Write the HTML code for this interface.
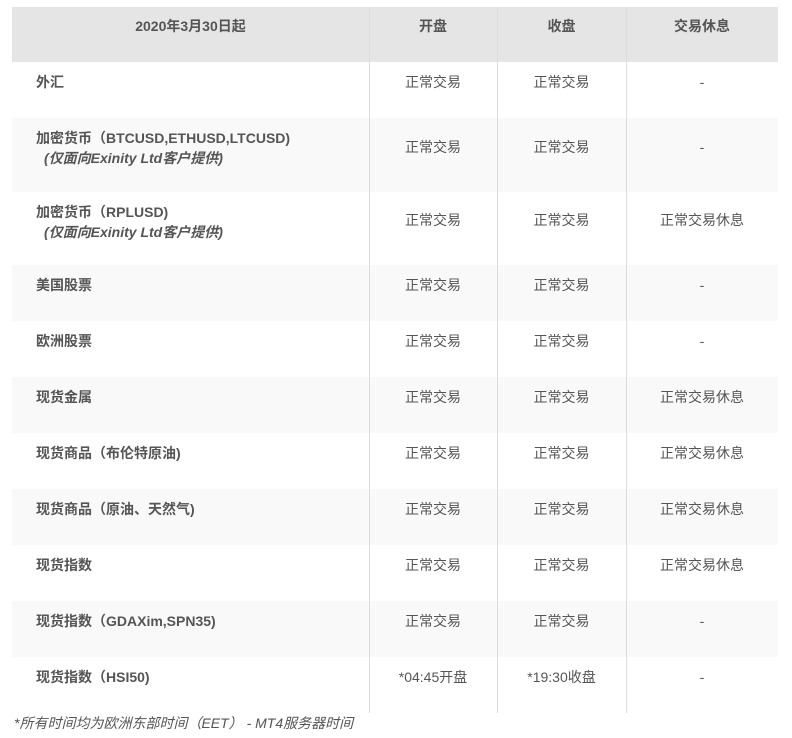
<!DOCTYPE html>
<html><head><meta charset="utf-8"><style>
body{margin:0;width:792px;height:738px;background:#fff;font-family:"Liberation Sans","Noto Sans CJK SC",sans-serif;color:#555;font-size:14px;position:relative;overflow:hidden}
.r{position:absolute;left:12px;width:766px}
.g{background:#f9f9f9}
.h{background:#e5e5e5;font-weight:bold;color:#555}
.c{position:absolute;top:10px;text-align:center;line-height:20px}
.c0{left:24px;text-align:left;font-weight:bold}
.c1{left:357px;width:128px}
.c2{left:485px;width:129px}
.c3{left:614px;width:152px}
.v{position:absolute;top:7px;width:1px;height:706px;background:#ddd}
i{font-weight:bold;margin-left:8px}
</style></head><body>
<div class="r h" style="top:7px;height:55px"><div class="c c0" style="left:0;width:357px;text-align:center;top:9px">2020年3月30日起</div><div class="c c1" style="top:9px">开盘</div><div class="c c2" style="top:9px">收盘</div><div class="c c3" style="top:9px">交易休息</div></div>
<div class="r" style="top:62px;height:56px"><div class="c c0">外汇</div><div class="c c1">正常交易</div><div class="c c2">正常交易</div><div class="c c3">-</div></div>
<div class="r g" style="top:118px;height:74px"><div class="c c0">加密货币（BTCUSD,ETHUSD,LTCUSD)<br><i>(仅面向Exinity Ltd客户提供)</i></div><div class="c c1" style="top:19px">正常交易</div><div class="c c2" style="top:19px">正常交易</div><div class="c c3" style="top:19px">-</div></div>
<div class="r" style="top:192px;height:73px"><div class="c c0">加密货币（RPLUSD)<br><i>(仅面向Exinity Ltd客户提供)</i></div><div class="c c1" style="top:18px">正常交易</div><div class="c c2" style="top:18px">正常交易</div><div class="c c3" style="top:18px">正常交易休息</div></div>
<div class="r g" style="top:265px;height:56px"><div class="c c0">美国股票</div><div class="c c1">正常交易</div><div class="c c2">正常交易</div><div class="c c3">-</div></div>
<div class="r" style="top:321px;height:56px"><div class="c c0">欧洲股票</div><div class="c c1">正常交易</div><div class="c c2">正常交易</div><div class="c c3">-</div></div>
<div class="r g" style="top:377px;height:56px"><div class="c c0">现货金属</div><div class="c c1">正常交易</div><div class="c c2">正常交易</div><div class="c c3">正常交易休息</div></div>
<div class="r" style="top:433px;height:56px"><div class="c c0">现货商品（布伦特原油)</div><div class="c c1">正常交易</div><div class="c c2">正常交易</div><div class="c c3">正常交易休息</div></div>
<div class="r g" style="top:489px;height:56px"><div class="c c0">现货商品（原油、天然气)</div><div class="c c1">正常交易</div><div class="c c2">正常交易</div><div class="c c3">正常交易休息</div></div>
<div class="r" style="top:545px;height:56px"><div class="c c0">现货指数</div><div class="c c1">正常交易</div><div class="c c2">正常交易</div><div class="c c3">正常交易休息</div></div>
<div class="r g" style="top:601px;height:56px"><div class="c c0">现货指数（GDAXim,SPN35)</div><div class="c c1">正常交易</div><div class="c c2">正常交易</div><div class="c c3">-</div></div>
<div class="r" style="top:657px;height:56px"><div class="c c0">现货指数（HSI50)</div><div class="c c1">*04:45开盘</div><div class="c c2">*19:30收盘</div><div class="c c3">-</div></div>
<div class="v" style="left:369px"></div><div class="v" style="left:497px"></div><div class="v" style="left:626px"></div>
<div style="position:absolute;left:14px;top:713px;font-style:italic;line-height:20px">*所有时间均为欧洲东部时间（EET） - MT4服务器时间</div>
</body></html>
